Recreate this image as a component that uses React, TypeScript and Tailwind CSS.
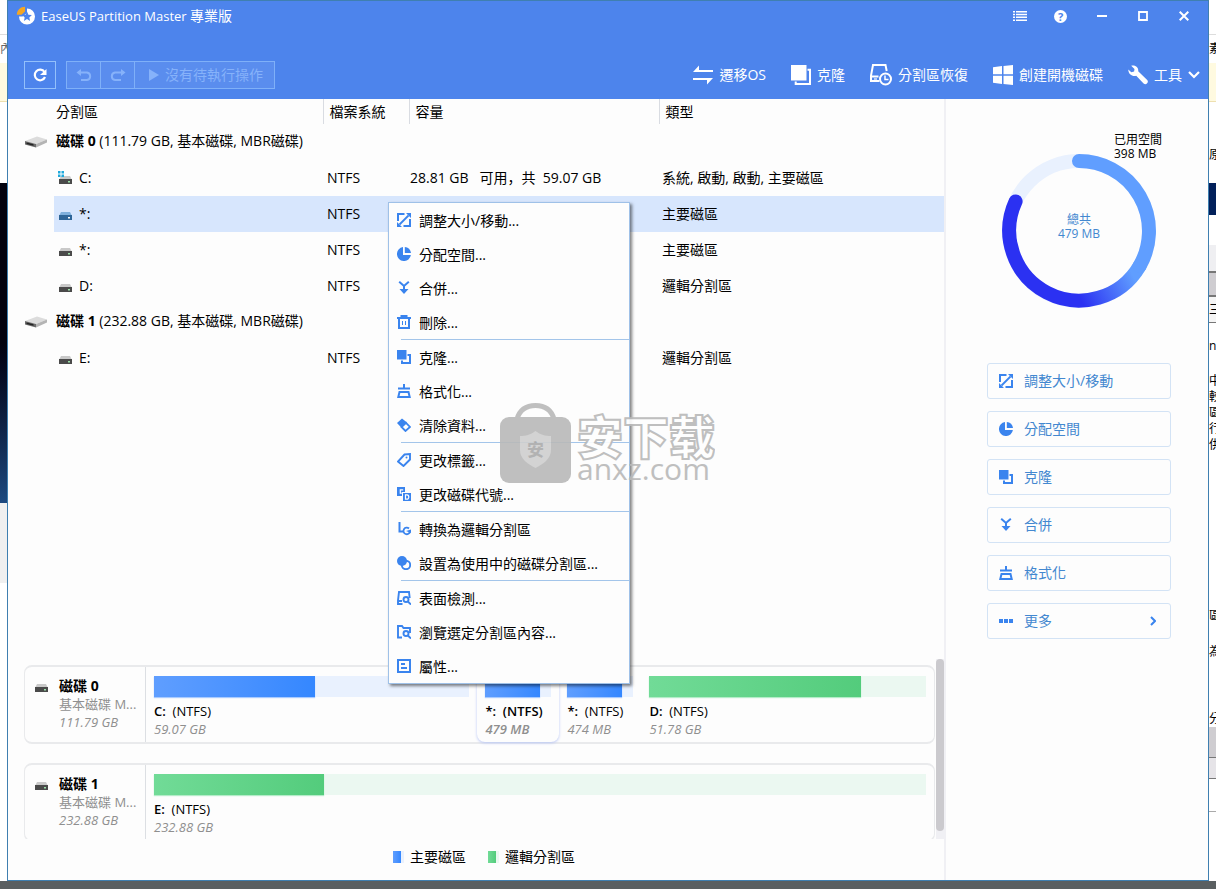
import type { ReactNode } from "react";
import clsx from "clsx";

type IconProps = { className?: string };

/* ---------- action icons, 14px grid ---------- */

function ResizeIcon({ className }: IconProps) {
  return (
    <svg viewBox="0 0 14 14" className={className} fill="none" stroke="currentColor" strokeWidth="2">
      <path d="M7.500 1H1v7M6.500 13H13V6" />
      <path d="M2.500 11.500l9-9" strokeWidth="1.800" />
      <path d="M9 0h5v5zM0 14V9l5 5z" fill="currentColor" stroke="none" />
    </svg>
  );
}

function PieIcon({ className }: IconProps) {
  return (
    <svg viewBox="0 0 14 14" className={className} fill="currentColor">
      <path d="M6 0.100A7 7 0 1 0 13.900 8H6z" />
      <path d="M7.800 0v6H14A6.600 6.600 0 0 0 7.800 0z" />
    </svg>
  );
}

function MergeIcon({ className }: IconProps) {
  return (
    <svg viewBox="0 0 14 14" className={className} fill="none" stroke="currentColor" strokeWidth="2">
      <path d="M2.200 0.800L7 5l4.800-4.200M7 4.500V9" />
      <path d="M2.500 8h9L7 13z" fill="currentColor" stroke="none" />
    </svg>
  );
}

function TrashIcon({ className }: IconProps) {
  return (
    <svg viewBox="0 0 14 14" className={className} fill="none" stroke="currentColor" strokeWidth="2">
      <path d="M0 3h14M4.500 2.500V1h5v1.500M2 3v10h10V3" />
      <path d="M5.500 6v4M8.500 6v4" strokeWidth="1" />
    </svg>
  );
}

function CloneIcon({ className }: IconProps) {
  return (
    <svg viewBox="0 0 14 14" className={className}>
      <path d="M0 0h9.500v9.500H0z" fill="currentColor" />
      <path d="M10.500 5H13v8H5v-2.500" fill="none" stroke="currentColor" strokeWidth="2" />
    </svg>
  );
}

function FormatIcon({ className }: IconProps) {
  return (
    <svg viewBox="0 0 14 14" className={className} fill="none" stroke="currentColor" strokeWidth="2">
      <path d="M7 0v4M1 4.500h12" />
      <path d="M2.500 8h9l1.200 5H1.300z" />
    </svg>
  );
}

function EraserIcon({ className }: IconProps) {
  return (
    <svg viewBox="0 0 14 14" className={className}>
      <path d="M5 0.500L0 5l4.500 4.800L10 4.500z" fill="currentColor" />
      <path d="M9 4.800l4 4.200-4.500 4L4.500 9z" fill="none" stroke="currentColor" strokeWidth="1.800" />
    </svg>
  );
}

function TagIcon({ className }: IconProps) {
  return (
    <svg viewBox="0 0 14 14" className={className} fill="none" stroke="currentColor" strokeWidth="1.900">
      <path d="M7.500 1.500L13 1v5.500L6.500 13 1 8.500z" />
      <circle cx="9.500" cy="4.500" r="1" fill="currentColor" stroke="none" />
    </svg>
  );
}

function LetterIcon({ className }: IconProps) {
  return (
    <svg viewBox="0 0 14 14" className={className} fill="none">
      <path d="M0 0h8v5H5v4H0z" fill="currentColor" />
      <path d="M6.200 2.800H3.300v3.400h1.500" stroke="#fff" strokeWidth="1.200" />
      <path d="M6 6h8v8H6z" fill="currentColor" />
      <path d="M8.500 7.800h1.500a1.800 2.200 0 0 1 0 4.400H8.500z" stroke="#fff" strokeWidth="1.200" />
    </svg>
  );
}

function LogicalIcon({ className }: IconProps) {
  return (
    <svg viewBox="0 0 14 14" className={className} fill="none" stroke="currentColor" strokeWidth="2">
      <path d="M2.500 0v9.500H6" />
      <path d="M12 6.500A3.300 3.300 0 1 0 13 9.500" strokeWidth="1.800" />
      <path d="M9 9l5-1.500V11z" fill="currentColor" stroke="none" />
    </svg>
  );
}

function ActiveIcon({ className }: IconProps) {
  return (
    <svg viewBox="0 0 14 14" className={className}>
      <circle cx="9" cy="9" r="4.200" fill="none" stroke="currentColor" strokeWidth="1.900" />
      <circle cx="5" cy="5" r="5" fill="currentColor" />
    </svg>
  );
}

function SurfaceIcon({ className }: IconProps) {
  return (
    <svg viewBox="0 0 14 14" className={className} fill="none" stroke="currentColor" strokeWidth="1.900">
      <path d="M5.500 13H1V9.500L2 1h10l0.700 6M1 10h4" />
      <circle cx="9" cy="8.500" r="2.500" />
      <path d="M10.800 10.500L14 13.500" />
    </svg>
  );
}

function BrowseIcon({ className }: IconProps) {
  return (
    <svg viewBox="0 0 14 14" className={className} fill="none" stroke="currentColor" strokeWidth="1.900">
      <path d="M5 12.500H1V1h4l1.500 2H13v5" />
      <circle cx="9" cy="8.500" r="2.500" />
      <path d="M10.800 10.500L14 13.500" />
    </svg>
  );
}

function PropertiesIcon({ className }: IconProps) {
  return (
    <svg viewBox="0 0 14 14" className={className} fill="none" stroke="currentColor" strokeWidth="2">
      <path d="M1 1h12v12H1z" />
      <path d="M4 5h4M4 9h6" strokeWidth="1.800" />
    </svg>
  );
}

function MoreIcon({ className }: IconProps) {
  return (
    <svg viewBox="0 0 14 14" className={className} fill="currentColor">
      <path d="M0 5h4v4H0zM5 5h4v4H5zM10 5h4v4h-4z" />
    </svg>
  );
}

/* ---------- toolbar icons, 20px grid ---------- */

function MigrateIcon() {
  return (
    <svg viewBox="0 0 20 20" className="w-5 h-5" fill="none" stroke="currentColor" strokeWidth="2">
      <path d="M2 6h18M0 14h18" />
      <path d="M0 7l6-6.500V7zM20 13l-6 6.500V13z" fill="currentColor" stroke="none" />
    </svg>
  );
}

function BigCloneIcon() {
  return (
    <svg viewBox="0 0 20 20" className="w-5 h-5">
      <path d="M0 0h15.500v15.500H0z" fill="currentColor" />
      <path d="M16.500 4.700H19V19H4.700v-2.500" fill="none" stroke="currentColor" strokeWidth="2" />
    </svg>
  );
}

function RecoverIcon() {
  return (
    <svg viewBox="0 0 22 22" className="w-[22px] h-[22px]" fill="none" stroke="currentColor" strokeWidth="2">
      <path d="M9.500 17H1v-5.500L3 1h12.500l1.200 6M1 12.500h7.500" />
      <path d="M4 15h3" strokeWidth="1.200" />
      <circle cx="15.500" cy="15" r="5.500" />
      <path d="M15 11.500v4h3.500" strokeWidth="1.500" />
    </svg>
  );
}

function WindowsIcon() {
  return (
    <svg viewBox="0 0 20 20" className="w-5 h-5" fill="currentColor">
      <path d="M0 2.200L9 1v8.300H0zM10.500 0.900L20 0v9.300h-9.500zM0 10.700h9V19l-9-1.200zM10.500 10.700H20V20l-9.500-0.900z" />
    </svg>
  );
}

function WrenchIcon() {
  return (
    <svg viewBox="0 0 20 20" className="w-5 h-5" fill="currentColor">
      <path d="M3.200 0.800C6.500-0.200 10.800 2 10.200 6.300l9 8.700c2 2-0.900 5.700-3.600 3.600L8.200 10.800C4.500 11.800 0.300 9.500 0.300 4.500l3 2.700 2.800-0.700L6.500 4z" />
    </svg>
  );
}

function Logo() {
  return (
    <svg viewBox="0 0 20 20" className="w-5 h-5 shrink-0">
      <path d="M11 2.500A8 8 0 1 1 3 10.500h3.500L11 7z" fill="#fff" />
      <path d="M0.800 8.800C0.800 4.200 4.600 0.800 9 0.800v4.700L5.500 8.800z" fill="#f5a623" />
      <path d="M11 5.500l1.400 3.200 3.500 0.400-2.600 2.300 0.800 3.500-3.100-1.800-3.100 1.800 0.800-3.500-2.600-2.300 3.500-0.400z" fill="#4d84ec" />
    </svg>
  );
}

/* ---------- drives ---------- */

function DiskIcon() {
  return (
    <svg viewBox="0 0 22 12" className="w-[22px] h-3">
      <path d="M0 5L12 0.500l10 3L11 8z" fill="#dcdcdc" />
      <path d="M11 8l11-4.500v3L11 11.500z" fill="#b4b4b4" />
      <path d="M0 5l11 3v3.500L0 8.500z" fill="#6a6a6a" />
      <path d="M1.500 6.500l7 1.800v1.500l-7-1.800z" fill="#222" />
    </svg>
  );
}

function DriveIcon({ system, selected }: { system?: boolean; selected?: boolean }) {
  return (
    <svg viewBox="0 0 15 14" className="w-[15px] h-[14px] shrink-0">
      <path d="M3 5h9l2 4H1z" fill={selected ? "#7fb0dc" : "#c9c9c9"} />
      <path d="M1 8h13v5H1z" fill={selected ? "#2f6698" : "#4a4a4a"} />
      <path d="M10 10h2v1.500h-2z" fill={selected ? "#fff" : "#9be0a8"} />
      {system && <path d="M0 0h2.500v2.500H0zM3.500 0H6v2.500H3.500zM0 3.500h2.500V6H0zM3.500 3.500H6V6H3.500z" fill="#1fa9dc" />}
    </svg>
  );
}

/* ---------- data ---------- */

interface Partition {
  name: string;
  capacity: string;
  type: string;
  system?: boolean;
  selected?: boolean;
}

interface Disk {
  name: string;
  info: string;
  partitions: Partition[];
}

const disks: Disk[] = [
  {
    name: "磁碟 0",
    info: "(111.79 GB, 基本磁碟, MBR磁碟)",
    partitions: [
      { name: "C:", capacity: "28.81 GB\u00a0\u00a0 可用，共\u00a0 59.07 GB", type: "系統, 啟動, 啟動, 主要磁區", system: true },
      { name: "*:", capacity: "", type: "主要磁區", selected: true },
      { name: "*:", capacity: "", type: "主要磁區" },
      { name: "D:", capacity: "", type: "邏輯分割區" },
    ],
  },
  {
    name: "磁碟 1",
    info: "(232.88 GB, 基本磁碟, MBR磁碟)",
    partitions: [{ name: "E:", capacity: "", type: "邏輯分割區" }],
  },
];

interface Block {
  name: string;
  size: string;
  used: number;
  kind: "primary" | "logical";
  width: string;
  selected?: boolean;
}

const maps: { name: string; size: string; blocks: Block[] }[] = [
  {
    name: "磁碟 0",
    size: "111.79 GB",
    blocks: [
      { name: "C:", size: "59.07 GB", used: 51, kind: "primary", width: "flex-[333]" },
      { name: "*:", size: "479 MB", used: 82, kind: "primary", width: "w-[82px]", selected: true },
      { name: "*:", size: "474 MB", used: 82, kind: "primary", width: "w-[82px]" },
      { name: "D:", size: "51.78 GB", used: 76.5, kind: "logical", width: "flex-[292]" },
    ],
  },
  {
    name: "磁碟 1",
    size: "232.88 GB",
    blocks: [{ name: "E:", size: "232.88 GB", used: 22, kind: "logical", width: "flex-1" }],
  },
];

type Action = { icon: (p: IconProps) => ReactNode; label: string };

const menuGroups: Action[][] = [
  [
    { icon: ResizeIcon, label: "調整大小/移動..." },
    { icon: PieIcon, label: "分配空間..." },
    { icon: MergeIcon, label: "合併..." },
    { icon: TrashIcon, label: "刪除..." },
  ],
  [
    { icon: CloneIcon, label: "克隆..." },
    { icon: FormatIcon, label: "格式化..." },
    { icon: EraserIcon, label: "清除資料..." },
  ],
  [
    { icon: TagIcon, label: "更改標籤..." },
    { icon: LetterIcon, label: "更改磁碟代號..." },
  ],
  [
    { icon: LogicalIcon, label: "轉換為邏輯分割區" },
    { icon: ActiveIcon, label: "設置為使用中的磁碟分割區..." },
  ],
  [
    { icon: SurfaceIcon, label: "表面檢測..." },
    { icon: BrowseIcon, label: "瀏覽選定分割區內容..." },
    { icon: PropertiesIcon, label: "屬性..." },
  ],
];

const sideActions: Action[] = [
  { icon: ResizeIcon, label: "調整大小/移動" },
  { icon: PieIcon, label: "分配空間" },
  { icon: CloneIcon, label: "克隆" },
  { icon: MergeIcon, label: "合併" },
  { icon: FormatIcon, label: "格式化" },
  { icon: MoreIcon, label: "更多" },
];

/* ---------- parts ---------- */

function TitleBar() {
  const btn = "w-[41px] h-8 flex items-center justify-center";
  return (
    <div className="flex items-center h-[30px] pl-2 pr-1">
      <Logo />
      <h1 className="ml-[5px] flex-1 text-[13px] leading-5">
        EaseUS Partition Master <span className="text-sm leading-5">專業版</span>
      </h1>
      <button className={btn} aria-label="選單">
        <svg viewBox="0 0 14 10" className="w-[14px] h-[10px]" fill="currentColor">
          <path d="M0 0h2v1.500H0zM3 0h11v1.500H3zM0 2.800h2v1.500H0zM3 2.800h11v1.500H3zM0 5.600h2v1.500H0zM3 5.600h11v1.500H3zM0 8.500h2V10H0zM3 8.500h11V10H3z" />
        </svg>
      </button>
      <button className={btn} aria-label="說明">
        <span className="w-[13px] h-[13px] rounded-full bg-white text-[#4d84ec] text-[11px] leading-[13px] font-bold text-center">?</span>
      </button>
      <button className={btn} aria-label="最小化">
        <svg viewBox="0 0 10 10" className="w-[10px] h-[10px]"><path d="M0 5h10" stroke="#fff" strokeWidth="2" /></svg>
      </button>
      <button className={btn} aria-label="最大化">
        <svg viewBox="0 0 10 10" className="w-[10px] h-[10px]"><path d="M1 1h8v8H1z" fill="none" stroke="#fff" strokeWidth="1.800" /></svg>
      </button>
      <button className={btn} aria-label="關閉">
        <svg viewBox="0 0 10 10" className="w-[10px] h-[10px]"><path d="M0.700 0.700l8.600 8.600M9.300 0.700L0.700 9.300" stroke="#fff" strokeWidth="2" /></svg>
      </button>
    </div>
  );
}

function ToolButton({ icon, children }: { icon: ReactNode; children: ReactNode }) {
  return (
    <button className="flex items-center gap-[6px] text-sm leading-5">
      {icon}
      {children}
    </button>
  );
}

function Toolbar() {
  return (
    <div className="flex items-center justify-between h-7 mt-[30px] mb-[10px] pl-4 pr-2">
      <div className="flex gap-[10px]">
        <button className="w-8 h-7 border border-[#93c0fb] flex items-center justify-center" aria-label="重新整理">
          <svg viewBox="0 0 14 14" className="w-[14px] h-[14px]" fill="none" stroke="#fff" strokeWidth="2.200">
            <path d="M11.500 4A5.300 5.300 0 1 0 12 9" />
            <path d="M13.500 1v6H7z" fill="#fff" stroke="none" />
          </svg>
        </button>
        <div className="flex h-7 border border-[#7fb0f8] bg-[#5a8dee] text-[#86b2fa] divide-x divide-[#7fb0f8]">
          <button disabled className="w-[34px] flex items-center justify-center" aria-label="復原">
            <svg viewBox="0 0 16 12" className="w-4 h-3" fill="none" stroke="currentColor" strokeWidth="2">
              <path d="M2 3.500h9a3.800 3.800 0 0 1 0 7.500H5" />
              <path d="M5 0L0.500 3.500 5 7z" fill="currentColor" stroke="none" />
            </svg>
          </button>
          <button disabled className="w-[34px] flex items-center justify-center" aria-label="重做">
            <svg viewBox="0 0 16 12" className="w-4 h-3" fill="none" stroke="currentColor" strokeWidth="2">
              <path d="M14 3.500H5a3.800 3.800 0 0 0 0 7.500h6" />
              <path d="M11 0l4.500 3.500L11 7z" fill="currentColor" stroke="none" />
            </svg>
          </button>
          <button disabled className="flex items-center gap-[6px] pl-[14px] pr-[11px] text-sm leading-5">
            <svg viewBox="0 0 10 12" className="w-[10px] h-3" fill="currentColor"><path d="M0 0l10 6-10 6z" /></svg>
            沒有待執行操作
          </button>
        </div>
      </div>
      <div className="flex items-center gap-[25px]">
        <ToolButton icon={<MigrateIcon />}>遷移OS</ToolButton>
        <ToolButton icon={<BigCloneIcon />}>克隆</ToolButton>
        <ToolButton icon={<RecoverIcon />}>分割區恢復</ToolButton>
        <ToolButton icon={<WindowsIcon />}>創建開機磁碟</ToolButton>
        <ToolButton icon={<WrenchIcon />}>
          工具
          <svg viewBox="0 0 12 8" className="w-3 h-2" fill="none" stroke="#fff" strokeWidth="2.200"><path d="M1 1l5 5 5-5" /></svg>
        </ToolButton>
      </div>
    </div>
  );
}

function PartitionTable() {
  return (
    <table className="w-full table-fixed text-left">
      <colgroup>
        <col className="w-[46px]" />
        <col className="w-[269px]" />
        <col className="w-[86px]" />
        <col className="w-[250px]" />
        <col />
      </colgroup>
      <thead>
        <tr className="h-[25px]">
          <td />
          <th className="font-normal pl-[2px]">分割區</th>
          <th className="font-normal pl-[6px] border-l border-[#d9dce2]">檔案系統</th>
          <th className="font-normal pl-[6px] border-l border-[#d9dce2]">容量</th>
          <th className="font-normal pl-[6px] border-l border-[#d9dce2]">類型</th>
        </tr>
      </thead>
      {disks.map((disk) => (
        <tbody key={disk.name}>
          <tr className="h-9">
            <td className="pl-[17px]"><DiskIcon /></td>
            <th colSpan={4} className="font-normal pl-[2px] pb-[2px]">
              <b>{disk.name}</b> {disk.info}
            </th>
          </tr>
          {disk.partitions.map((p, i) => (
            <tr key={i} className="h-9">
              <td />
              <td className={clsx("pl-1", p.selected && "bg-[#d7e6fd]")}>
                <span className="flex items-center gap-[6px]">
                  <DriveIcon system={p.system} selected={p.selected} />
                  {p.name}
                </span>
              </td>
              <td className={clsx("pl-1", p.selected && "bg-[#d7e6fd]")}>NTFS</td>
              <td className={clsx("pl-px font-['Open_Sans','Noto_Sans_CJK_SC',sans-serif]", p.selected && "bg-[#d7e6fd]")}>{p.capacity}</td>
              <td className={clsx("pl-[3px]", p.selected && "bg-[#d7e6fd]")}>{p.type}</td>
            </tr>
          ))}
        </tbody>
      ))}
    </table>
  );
}

function ContextMenu() {
  return (
    <div role="menu" className="absolute left-[380px] top-[103px] z-10 w-[242px] bg-[#fdfdfd] border border-[#9fc1e8] shadow-[2px_2px_3px_rgba(0,0,0,0.5)]">
      {menuGroups.map((group, i) => (
        <div key={i}>
          {i > 0 && <hr className="ml-3 border-[#a3c5ea]" />}
          {group.map(({ icon: Icon, label }) => (
            <button key={label} role="menuitem" className="flex items-center gap-2 w-full h-[34px] pl-2 text-left">
              <Icon className="w-[14px] h-[14px] text-[#3a84ee] shrink-0" />
              <span className="pt-[2px]">{label}</span>
            </button>
          ))}
        </div>
      ))}
    </div>
  );
}

function Watermark() {
  return (
    <div className="absolute left-[492px] top-[304px] z-20 flex gap-[6px] text-[#b9b9b9] opacity-90 pointer-events-none">
      <svg viewBox="0 0 71 81" className="w-[71px] h-[81px]">
        <path d="M17 16C20 6 27 2.500 35.500 2.500S51 6 54 16" fill="none" stroke="#b9b9b9" strokeWidth="5" />
        <rect y="14" width="71" height="66" rx="9" fill="#b9b9b9" />
        <path d="M35.500 28c5 4 10 5 15.500 5v14c0 9-8 14-15.500 18C28 61 20 56 20 47V33c5.500 0 10.500-1 15.500-5z" fill="#cfcfcf" />
        <text x="35.500" y="53" textAnchor="middle" fontSize="17" fill="#aaa" className="font-bold">安</text>
      </svg>
      <div className="pt-[10px]">
        <div className="text-[46px] leading-[46px] font-black text-white [-webkit-text-stroke:2px_#b9b9b9]">安下载</div>
        <div className="text-[30px] leading-5">anxz.com</div>
      </div>
    </div>
  );
}

const track = { primary: "bg-[#e9f1fe]", logical: "bg-[#ebf8f1]" };
const fill = {
  primary: "bg-linear-to-r from-[#5f9eff] to-[#3487ff] shadow-[0_1px_1px_#a9cbff]",
  logical: "bg-linear-to-r from-[#71db97] to-[#53cc7c] shadow-[0_1px_1px_#b4ecc8]",
};

function DiskMap() {
  return (
    <div className="flex h-[180px] overflow-hidden">
      <div className="flex-1 min-w-0 pl-4 pr-px pt-[6px]">
        {maps.map((disk) => (
          <div key={disk.name} className="flex h-[79px] mb-[19px] border-x border-y-2 border-[#e9eaec] rounded-lg">
            <div className="flex gap-[10px] w-[121px] pl-[9px] pt-[10px] border-r border-[#dcdfe3]">
              <div className="pt-[2px]"><DriveIcon /></div>
              <div className="min-w-0">
                <div className="text-sm leading-[18px] font-bold">{disk.name}</div>
                <div className="text-[13px] leading-[18px] text-[#8f8f8f]">基本磁碟 M...</div>
                <div className="text-[13px] leading-[18px] italic text-[#8f8f8f]">{disk.size}</div>
              </div>
            </div>
            {disk.blocks.map((b, i) => (
              <div
                key={i}
                className={clsx(
                  "px-2 pt-[9px] text-[13px] leading-[18px]",
                  b.width,
                  b.selected && "rounded-b-lg shadow-[0_1px_3px_#b9c6f5] bg-[#fdfdfd] [&_p]:font-semibold"
                )}
              >
                <div className={clsx("h-[21px]", track[b.kind])}>
                  <div className={clsx("h-full", fill[b.kind])} style={{ width: `${b.used}%` }} />
                </div>
                <p className="mt-[5px] whitespace-nowrap"><span className="font-semibold">{b.name}</span>&nbsp; (NTFS)</p>
                <p className="italic text-[#8f8f8f] whitespace-nowrap">{b.size}</p>
              </div>
            ))}
          </div>
        ))}
      </div>
      <div className="w-2 bg-[#f0f0f4]">
        <div className="h-[172px] rounded-full bg-[#cbcace]" />
      </div>
    </div>
  );
}

function Legend() {
  return (
    <div className="flex justify-center gap-[22px] h-[41px] pl-4 pt-2">
      <div className="flex items-center h-5 gap-[6px]">
        <span className="w-[11px] h-3 bg-[#e9f1fe]"><span className="block w-2 h-3 bg-linear-to-r from-[#5f9eff] to-[#3487ff]" /></span>
        主要磁區
      </div>
      <div className="flex items-center h-5 gap-[6px]">
        <span className="w-[11px] h-3 bg-[#ebf8f1]"><span className="block w-2 h-3 bg-linear-to-r from-[#71db97] to-[#53cc7c]" /></span>
        邏輯分割區
      </div>
    </div>
  );
}

function UsageRing() {
  return (
    <div className="relative w-[154px] h-[154px]">
      <svg viewBox="0 0 154 154" className="w-full h-full" fill="none" strokeWidth="14" strokeLinecap="round">
        <defs>
          <linearGradient id="ring" gradientUnits="userSpaceOnUse" x1="130" y1="120" x2="80" y2="148">
            <stop offset="0" stopColor="#609eff" />
            <stop offset="1" stopColor="#2b31f2" />
          </linearGradient>
        </defs>
        <circle cx="77" cy="77" r="70" stroke="#e9f1fe" />
        <path d="M137.600 112A70 70 0 0 1 13.600 47.400" stroke="url(#ring)" />
        <path d="M77 7A70 70 0 0 1 137.600 112" stroke="#609eff" />
      </svg>
      <div className="absolute inset-x-0 top-[59px] text-center text-xs leading-[14px] text-[#4388d0]">
        <p>總共</p>
        <p>479 MB</p>
      </div>
      <div className="absolute left-[112px] -top-[21px] text-xs leading-[14px] whitespace-nowrap">
        <p>已用空間</p>
        <p>398 MB</p>
      </div>
    </div>
  );
}

function SidePanel() {
  return (
    <aside className="w-[264px] shrink-0 flex flex-col items-center pt-[55px] pl-1 border-l-2 border-[#f0f0f4]">
      <UsageRing />
      <div className="flex flex-col gap-3 w-[184px] mt-[55px]">
        {sideActions.map(({ icon: Icon, label }) => (
          <button key={label} className="flex items-center gap-[11px] h-9 px-[11px] border border-[#d3e3f5] rounded-[3px] text-[#4388d0]">
            <Icon className="w-[14px] h-[14px] text-[#3a84ee]" />
            {label}
            {label === "更多" && (
              <svg viewBox="0 0 6 10" className="w-[6px] h-[10px] ml-auto mr-[3px]" fill="none" stroke="#3a84ee" strokeWidth="2"><path d="M1 1l4 4-4 4" /></svg>
            )}
          </button>
        ))}
      </div>
    </aside>
  );
}

/* slivers of the desktop left and right of the window */
function DesktopLeft() {
  return (
    <div className="flex flex-col w-[7px] overflow-hidden bg-white text-xs leading-[14px]">
      <div className="h-[35px] border-b border-[#ddd]" />
      <div className="h-7 pt-[7px] text-[#666]">內</div>
      <div className="h-[39px] bg-[#fffae0] border-b border-[#eee0b0]" />
      <div className="h-[81px]" />
      <div className="h-[320px] bg-linear-to-b from-[#02020f] via-[#02020f] to-[#1d4a80]" />
      <div className="h-20 bg-[#f0f0f0]" />
    </div>
  );
}

function DesktopRight() {
  return (
    <div className="flex flex-col w-[7px] overflow-hidden bg-white text-xs leading-[14px]">
      <div className="h-[35px] border-b border-[#ddd]" />
      <div className="h-7 pt-[7px]">素</div>
      <div className="h-[39px] bg-[#fffae0] border-b border-[#eee0b0]" />
      <div className="h-[81px] pt-[46px]">原</div>
      <div className="h-8 bg-[#02205a]" />
      <div className="h-[30px]" />
      <div className="h-[26px] bg-[#efeff2]" />
      <div className="h-[26px] bg-[#cfcdd1] border-y-2 border-[#777]" />
      <div className="h-[26px] pt-[6px] bg-[#f5f5f5] border-b border-[#777]">三</div>
      <div className="h-[50px] pt-[16px]">na</div>
      <div className="h-[80px] leading-4">中<br />較<br />區<br />行<br />供</div>
      <div className="h-[156px]" />
      <div className="h-[36px]">區</div>
      <div className="h-[67px]">為</div>
      <div className="h-[15px]">分</div>
      <div className="h-[31px] bg-[#cfcdd1] border-b border-[#777]" />
      <div className="h-[21px] bg-[#e6e4e8] border-b border-[#777]" />
      <div className="h-[33px] border-b border-[#aaa]" />
    </div>
  );
}

export default function App() {
  return (
    <div className="flex flex-col min-h-screen bg-[#5a5f61] text-sm leading-5 text-black font-['Open_Sans','Noto_Sans_CJK_TC',sans-serif]">
      <div className="flex flex-1">
        <DesktopLeft />
        <div className="flex flex-col flex-1 min-w-0 bg-[#fdfdfd] border border-[#3f7fb0]">
          <header className="bg-[#4d84ec] text-white">
            <TitleBar />
            <Toolbar />
          </header>
          <div className="relative flex flex-1">
            <main className="flex flex-col flex-1 min-w-0">
              <div className="flex-1">
                <PartitionTable />
              </div>
              <DiskMap />
              <Legend />
            </main>
            <SidePanel />
            <ContextMenu />
            <Watermark />
          </div>
        </div>
        <DesktopRight />
      </div>
      <div className="h-2" />
    </div>
  );
}
